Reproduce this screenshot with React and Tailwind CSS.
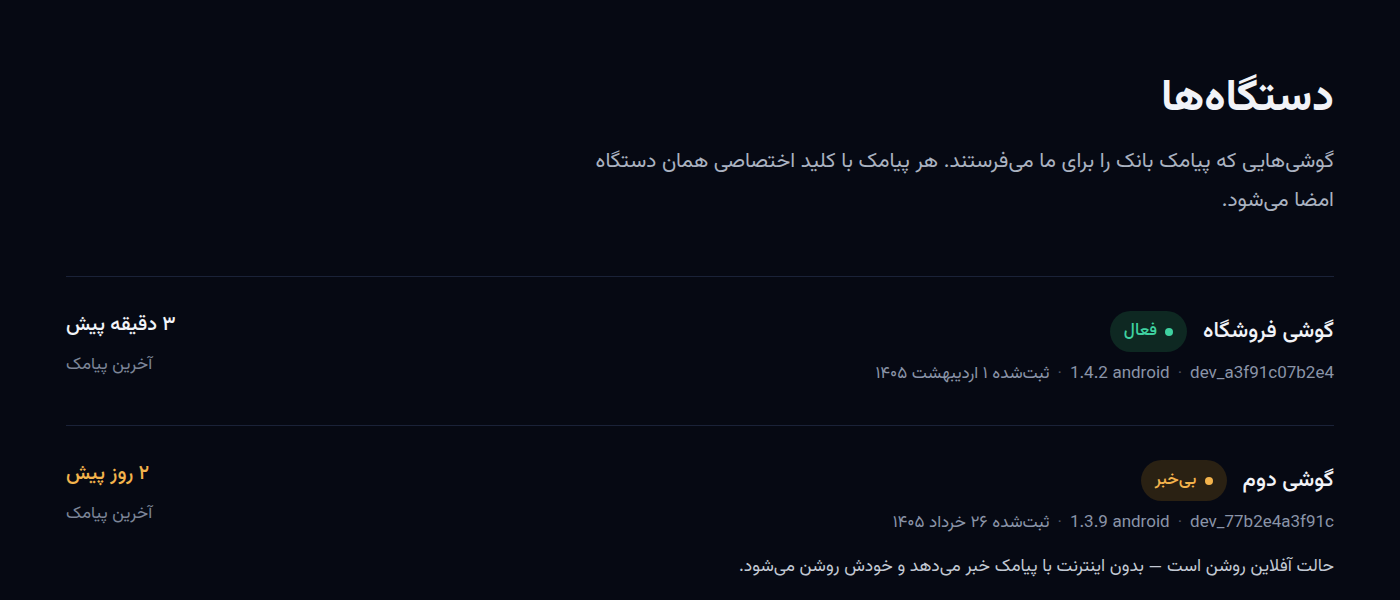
export default function App() {
    const devices = [
        {
            name: "گوشی فروشگاه",
            status: "فعال",
            tone: "green",
            id: "dev_a3f91c07b2e4",
            version: "1.4.2 android",
            registered: "ثبت‌شده ۱ اردیبهشت ۱۴۰۵",
            lastSeen: "۳ دقیقه پیش",
        },
        {
            name: "گوشی دوم",
            status: "بی‌خبر",
            tone: "amber",
            id: "dev_77b2e4a3f91c",
            version: "1.3.9 android",
            registered: "ثبت‌شده ۲۶ خرداد ۱۴۰۵",
            lastSeen: "۲ روز پیش",
            note: "حالت آفلاین روشن است — بدون اینترنت با پیامک خبر می‌دهد و خودش روشن می‌شود.",
        },
    ];

    return (
        <div
            dir="rtl"
            className="min-h-screen bg-[#060913] text-white px-[66px] pt-[74px]"
            style={{fontFamily: "Vazirmatn, Roboto, sans-serif"}}
        >
            <h1 className="text-[44px] leading-[52px] font-bold text-[#f1f3f8]">دستگاه‌ها</h1>
            <p className="mt-4 max-w-[745px] text-[21px] leading-[39px] text-[#aab2c0]">
                گوشی‌هایی که پیامک بانک را برای ما می‌فرستند. هر پیامک با کلید اختصاصی همان دستگاه امضا می‌شود.
            </p>

            <div className="mt-14">
                {devices.map((d) => (
                    <div
                        key={d.id}
                        className="flex justify-between items-start border-t border-[#1a2238] pt-[34px] pb-[39px]"
                    >
                        <div className="flex flex-col">
                            <div className="flex items-center gap-4">
                                <span className="text-[22px] font-medium text-[#f1f3f8]">{d.name}</span>
                                {d.tone === "green" ? (
                                    <span className="flex items-center gap-2 h-[41px] px-[14px] rounded-full bg-[#0e2822] text-[#3fd1a0] text-[17px] font-medium">
                                        <span className="w-2 h-2 rounded-full bg-[#3fd1a0]"></span>
                                        {d.status}
                                    </span>
                                ) : (
                                    <span className="flex items-center gap-2 h-[41px] px-[14px] rounded-full bg-[#2a2113] text-[#f3b34c] text-[17px] font-medium">
                                        <span className="w-2 h-2 rounded-full bg-[#f3b34c]"></span>
                                        {d.status}
                                    </span>
                                )}
                            </div>
                            <div className="mt-2.5 flex items-center gap-2 text-[17px] leading-6 text-[#8a94a8]">
                                <span dir="ltr">{d.id}</span>
                                <span className="text-[#4b5468]">·</span>
                                <span dir="ltr">{d.version}</span>
                                <span className="text-[#4b5468]">·</span>
                                <span>{d.registered}</span>
                            </div>
                            {d.note && (
                                <p className="mt-5 text-[17.5px] leading-6 text-[#c3c9d4]">{d.note}</p>
                            )}
                        </div>
                        <div className="flex flex-col items-end">
                            <span
                                className={
                                    d.tone === "green"
                                        ? "text-[20px] leading-7 font-medium text-[#f1f3f8]"
                                        : "text-[20px] leading-7 font-medium text-[#f3b34c]"
                                }
                            >
                                {d.lastSeen}
                            </span>
                            <span className="mt-3.5 text-[17px] leading-6 text-[#7c8598]">آخرین پیامک</span>
                        </div>
                    </div>
                ))}
            </div>
        </div>
    );
}
